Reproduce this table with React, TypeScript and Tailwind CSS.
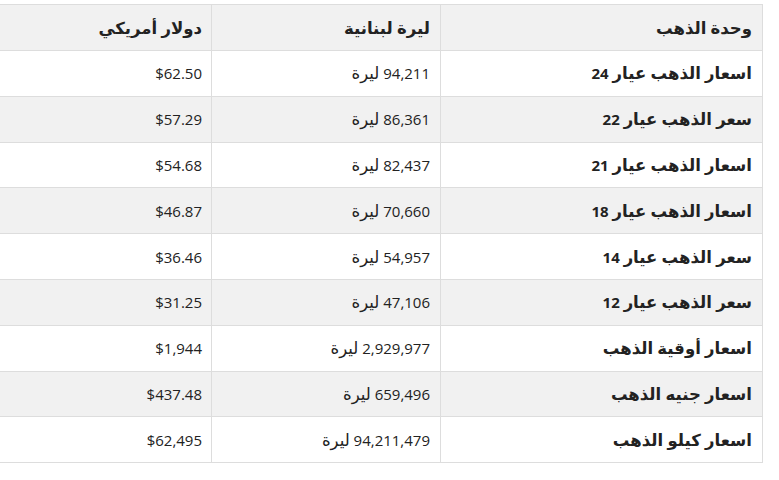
import React from "react";

const rows = [
  ["اسعار الذهب عيار 24", "94,211 ليرة", "$62.50"],
  ["سعر الذهب عيار 22", "86,361 ليرة", "$57.29"],
  ["اسعار الذهب عيار 21", "82,437 ليرة", "$54.68"],
  ["اسعار الذهب عيار 18", "70,660 ليرة", "$46.87"],
  ["سعر الذهب عيار 14", "54,957 ليرة", "$36.46"],
  ["سعر الذهب عيار 12", "47,106 ليرة", "$31.25"],
  ["اسعار أوقية الذهب", "2,929,977 ليرة", "$1,944"],
  ["اسعار جنيه الذهب", "659,496 ليرة", "$437.48"],
  ["اسعار كيلو الذهب", "94,211,479 ليرة", "$62,495"],
];

function T({ s }: { s: string }) {
  const parts = s.split(/([\u0600-\u06FF]+(?:\s+[\u0600-\u06FF]+)*)/);
  return (
    <>
      {parts.map((p, i) =>
        /[\u0600-\u06FF]/.test(p) ? (
          <span key={i} className="text-[16.5px]">{p}</span>
        ) : (
          <span key={i}>{p}</span>
        )
      )}
    </>
  );
}

export default function App() {
  return (
    <div className="w-[779px] h-[480px] bg-white pt-1" style={{ fontFamily: '"Open Sans", "DejaVu Sans", sans-serif' }}>
      <table dir="rtl" className="w-[763px] border-collapse text-[15px] leading-[20px] text-[#222]">
        <thead>
          <tr className="bg-[#f1f1f1] h-[46px]">
            <th className="w-[322px] border border-[#dddddd] px-[10px] text-right font-bold"><T s="وحدة الذهب" /></th>
            <th className="w-[229px] border border-[#dddddd] px-[10px] text-right font-bold"><T s="ليرة لبنانية" /></th>
            <th className="border border-[#dddddd] border-l-0 px-[9px] text-right font-bold"><T s="دولار أمريكي" /></th>
          </tr>
        </thead>
        <tbody>
          {rows.map((r, i) => (
            <tr key={i} className={`h-[45.8px] ${i % 2 === 1 ? "bg-[#f1f1f1]" : "bg-white"}`}>
              <td className="border border-[#dddddd] px-[10px] text-right font-bold"><T s={r[0]} /></td>
              <td className="border border-[#dddddd] px-[10px] text-right"><T s={r[1]} /></td>
              <td className="border border-[#dddddd] border-l-0 px-[9px] text-right">{r[2]}</td>
            </tr>
          ))}
        </tbody>
      </table>
    </div>
  );
}
